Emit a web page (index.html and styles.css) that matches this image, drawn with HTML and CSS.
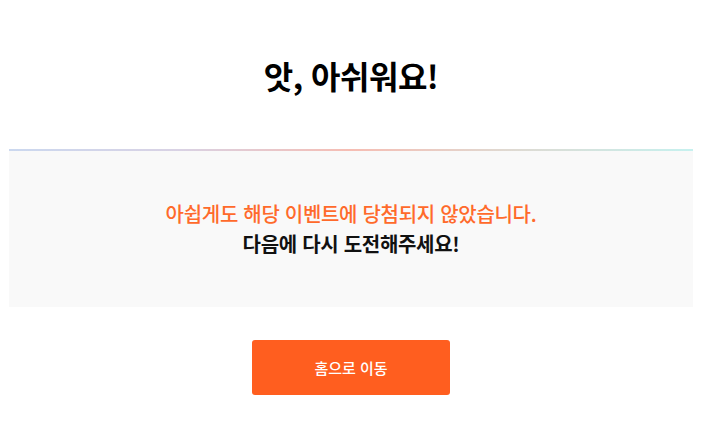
FILE: index.html
```html
<!DOCTYPE html>
<html lang="ko">
<head>
    <meta charset="UTF-8">
    <meta name="viewport" content="width=device-width, initial-scale=1.0">
    <title>이벤트 결과</title>
    <link rel="stylesheet" href="styles.css">
</head>
<body>
    <div class="wrap">
        <div class="header">
            <h1>앗, 아쉬워요!</h1>
        </div>
        <div class="divider"></div>
        <div class="result">
            <p class="result-main">아쉽게도 해당 이벤트에 당첨되지 않았습니다.</p>
            <p class="result-sub">다음에 다시 도전해주세요!</p>
        </div>
        <div class="actions">
            <a href="#" class="button">홈으로 이동</a>
        </div>
    </div>
</body>
</html>
```

FILE: styles.css
```css
body {
    font-family: 'Noto Sans CJK KR', 'Noto Sans', sans-serif;
    background-color: #fff;
    color: #111;
    margin: 0;
    padding: 0;
}
.wrap {
    padding: 0 17px 0 9px;
}
.header {
    height: 149px;
    display: flex;
    justify-content: center;
    align-items: center;
}
.header h1 {
    margin: 0;
    font-size: 32px;
    letter-spacing: -0.5px;
    font-weight: bold;
    color: #000;
}
.divider {
    height: 2px;
    background: linear-gradient(90deg, #cbd8ef 0%, #d9d2e4 25%, #f6bdb3 50%, #e0d8d0 72%, #c6f1ef 100%);
}
.result {
    height: 156px;
    background-color: #f9f9f9;
    display: flex;
    flex-direction: column;
    justify-content: center;
    align-items: center;
}
.result p {
    margin: 0;
    font-size: 20px;
    letter-spacing: -0.3px;
    line-height: 30px;
}
.result-main {
    color: #ff6a2b;
    font-weight: 500;
}
.result-sub {
    color: #111;
    font-weight: bold;
}
.actions {
    display: flex;
    justify-content: center;
    margin-top: 33px;
}
.button {
    display: flex;
    justify-content: center;
    align-items: center;
    width: 198px;
    height: 55px;
    background-color: #ff5e1f;
    color: #fff;
    border-radius: 3px;
    font-size: 15px;
    font-weight: 500;
    text-decoration: none;
}
```
